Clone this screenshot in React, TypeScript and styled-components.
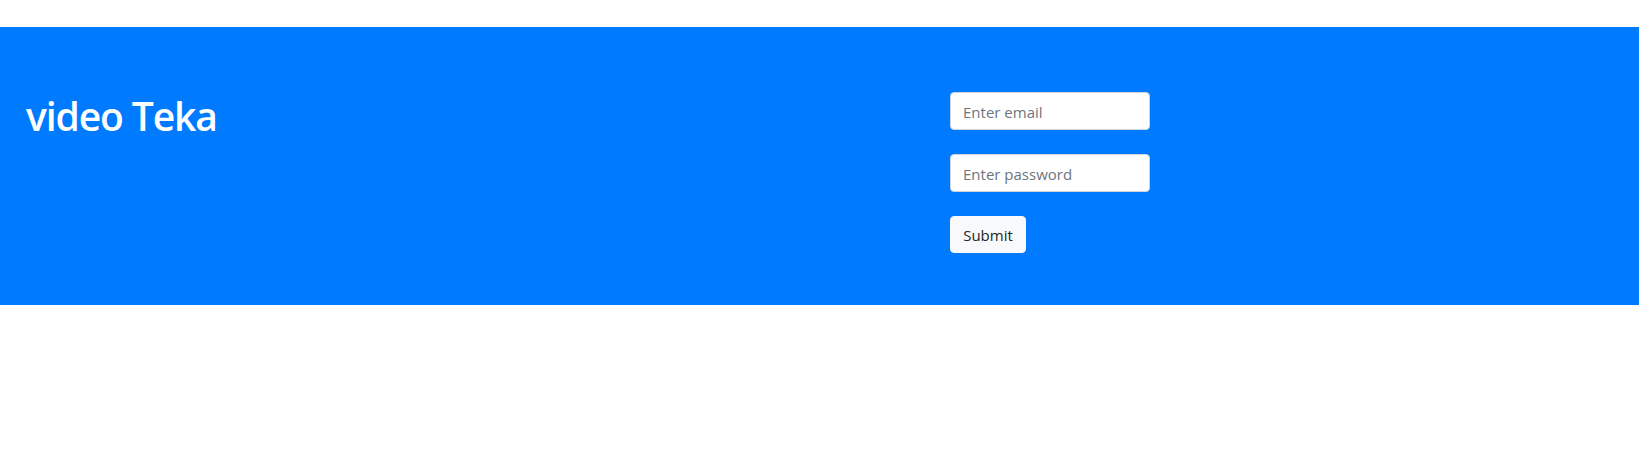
import React from "react";
import styled, { createGlobalStyle } from "styled-components";

const Global = createGlobalStyle`
  html, body { margin: 0; padding: 0; background: #ffffff; }
  body { font-family: "Open Sans", "Noto Sans", Arial, sans-serif; color: #212529; }
  * { box-sizing: border-box; }
`;

const Page = styled.div`
  padding-top: 27px;
`;

const Banner = styled.header`
  background: #007bff;
  height: 278px;
  padding: 65px 26px 0 26px;
  display: grid;
  grid-template-columns: 924px 200px;
  align-items: start;
`;

const Title = styled.h1`
  margin: 0;
  font-family: "Open Sans", "Noto Sans", sans-serif;
  font-size: 39px;
  font-weight: 600;
  line-height: 48px;
  letter-spacing: -1.1px;
  color: #ffffff;
`;

const Form = styled.form`
  display: flex;
  flex-direction: column;
  align-items: flex-start;
  gap: 24px;
`;

const Input = styled.input`
  width: 200px;
  height: 38px;
  padding: 7px 12px 5px;
  font-family: "Open Sans", "Noto Sans", sans-serif;
  font-size: 15px;
  color: #495057;
  background: #ffffff;
  border: 1px solid #ced4da;
  border-radius: 4px;
  outline: none;
  &::placeholder { color: #6c757d; }
`;

const Button = styled.button`
  width: 76px;
  height: 37px;
  padding: 6px 12px;
  font-family: "Open Sans", "Noto Sans", sans-serif;
  font-size: 15px;
  color: #212529;
  background: #f8f9fa;
  border: 1px solid #f8f9fa;
  border-radius: 4px;
  cursor: pointer;
`;

export default function App() {
  return (
    <Page>
      <Global />
      <Banner>
        <Title>video Teka</Title>
        <Form onSubmit={(e) => e.preventDefault()}>
          <Input type="email" placeholder="Enter email" />
          <Input type="password" placeholder="Enter password" />
          <Button type="submit">Submit</Button>
        </Form>
      </Banner>
    </Page>
  );
}
